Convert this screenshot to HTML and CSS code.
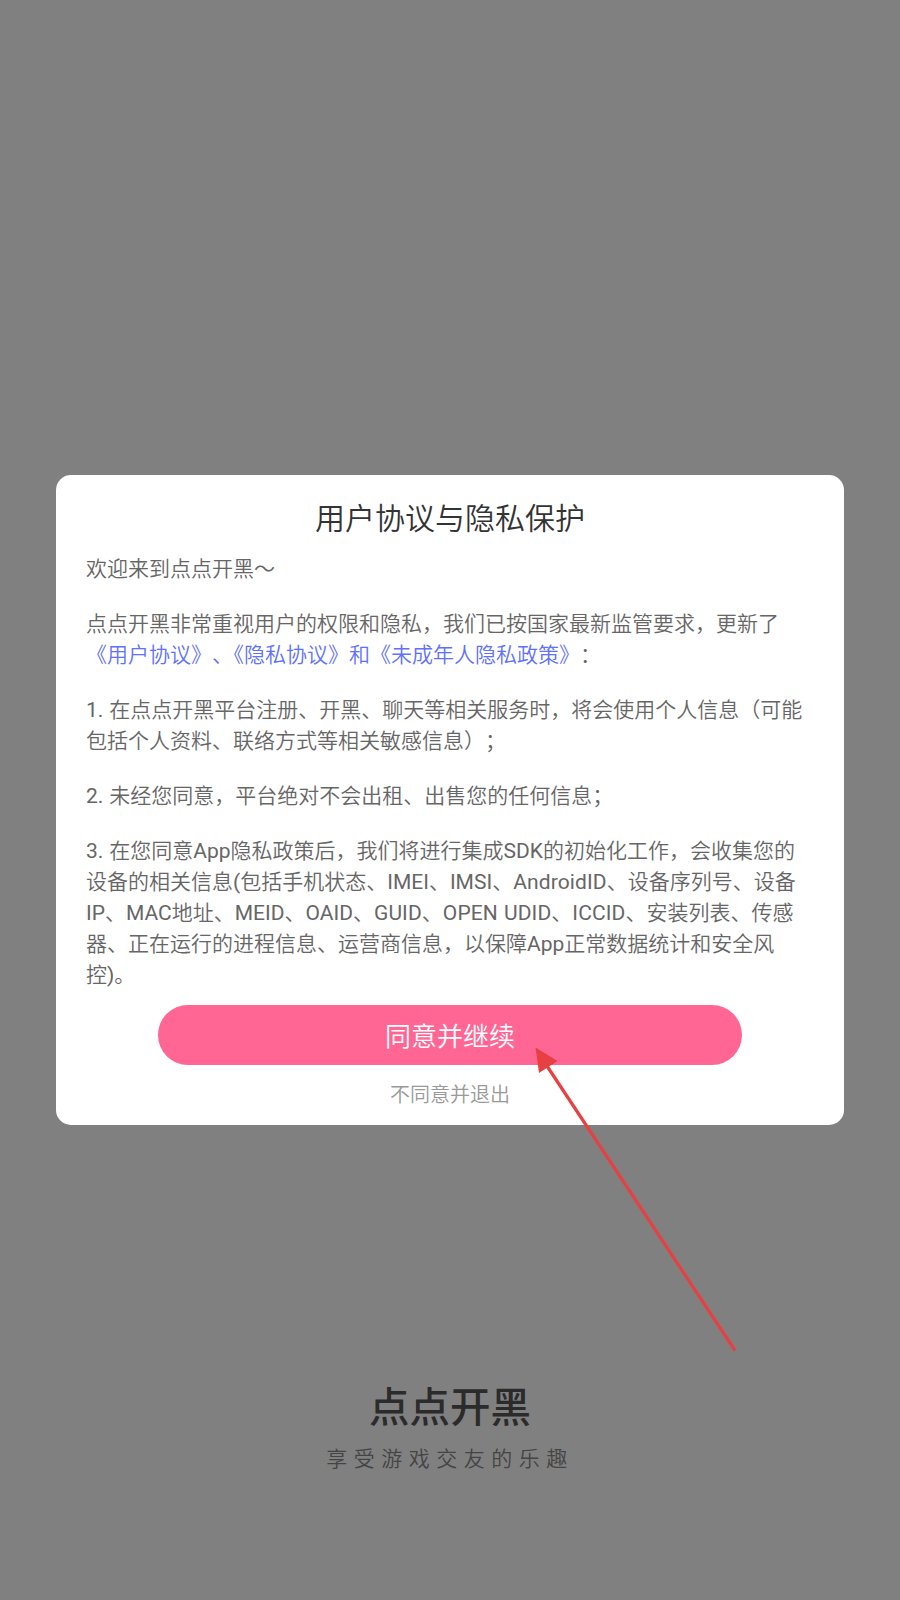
FILE: index.html
```html
<!DOCTYPE html>
<html lang="zh-CN">
<head>
<meta charset="utf-8">
<title>点点开黑</title>
<link rel="stylesheet" href="styles.css">
</head>
<body>
<main class="screen">
  <section class="dialog">
    <h1 class="title">用户协议与隐私保护</h1>
    <div class="content">
      <p>欢迎来到点点开黑～</p>
      <p>点点开黑非常重视用户的权限和隐私，我们已按国家最新监管要求，更新了<br><a class="link">《用户协议》<span class="tight">、</span>《隐私协议》和《未成年人隐私政策》</a>：</p>
      <p><b>1. </b>在点点开黑平台注册、开黑、聊天等相关服务时，将会使用个人信息（可能<br>包括个人资料、联络方式等相关敏感信息）；</p>
      <p><b>2. </b>未经您同意，平台绝对不会出租、出售您的任何信息；</p>
      <p><b>3. </b>在您同意<b>App</b>隐私政策后，我们将进行集成<b>SDK</b>的初始化工作，会收集您的<br>设备的相关信息<b>(</b>包括手机状态、<b>IMEI</b>、<b>IMSI</b>、<b class="latin">AndroidID</b>、设备序列号、设备<br><b>IP</b>、<b>MAC</b>地址、<b>MEID</b>、<b>OAID</b>、<b class="latin">GUID</b>、<b class="latin">OPEN UDID</b>、<b class="latin">ICCID</b>、安装列表、传感<br>器、正在运行的进程信息、运营商信息，以保障<b>App</b>正常数据统计和安全风<br>控<b>)</b>。</p>
    </div>
    <button class="agree">同意并继续</button>
    <button class="decline">不同意并退出</button>
  </section>
  <footer class="brand">
    <div class="name">点点开黑</div>
    <div class="slogan">享受游戏交友的乐趣</div>
  </footer>
  <svg class="arrow" viewBox="0 0 900 1600"><path d="M735 1350.5L547 1066" fill="none" stroke="#e64042" stroke-width="3.2"/><path d="M535.5 1047.5L557.5 1061L539 1073Z" fill="#e64042"/></svg>
</main>
</body>
</html>
```
FILE: styles.css
```css
body { margin: 0; font-family: Roboto, "Noto Sans CJK SC", sans-serif; font-weight: 350; }
.screen { position: relative; display: flex; flex-direction: column; align-items: center; box-sizing: border-box; width: 900px; height: 1600px; padding-top: 475px; background: #808080; overflow: hidden; }
.dialog { display: flex; flex-direction: column; align-items: center; box-sizing: border-box; width: 788px; height: 650px; padding: 22px 30px 0; border-radius: 15px; background: #fff; }
.title { margin: 0; font-size: 30px; line-height: 44px; font-weight: 350; color: #333; }
.content { width: 728px; margin-top: 13px; font-size: 21px; line-height: 31px; color: #666; white-space: nowrap; text-spacing-trim: space-all; word-spacing: 0.7px; }
.content p { margin: 0 0 24px; }
.content p:last-child { margin: 0; }
.content b { font-weight: 400; }
.link { color: #6070ff; }
.tight { letter-spacing: -10px; }
.latin { letter-spacing: 0.12px; }
.agree, .decline { border: 0; padding: 0; font-family: inherit; font-weight: 350; }
.agree { width: 584px; height: 60px; flex-shrink: 0; margin-top: 14px; padding-bottom: 2px; border-radius: 30px; background: #ff6694; color: #fff; font-size: 26px; }
.decline { margin-top: 15px; background: none; color: #999; font-size: 20px; line-height: 30px; }
.brand { margin-top: 253px; text-align: center; }
.name { color: #2b2b2b; font-size: 40.5px; line-height: 60px; font-weight: 500; }
.slogan { margin-top: 6px; color: #444; font-size: 21px; line-height: 31px; letter-spacing: 6.5px; }
.arrow { position: absolute; left: 0; top: 0; width: 900px; height: 1600px; pointer-events: none; }
```
